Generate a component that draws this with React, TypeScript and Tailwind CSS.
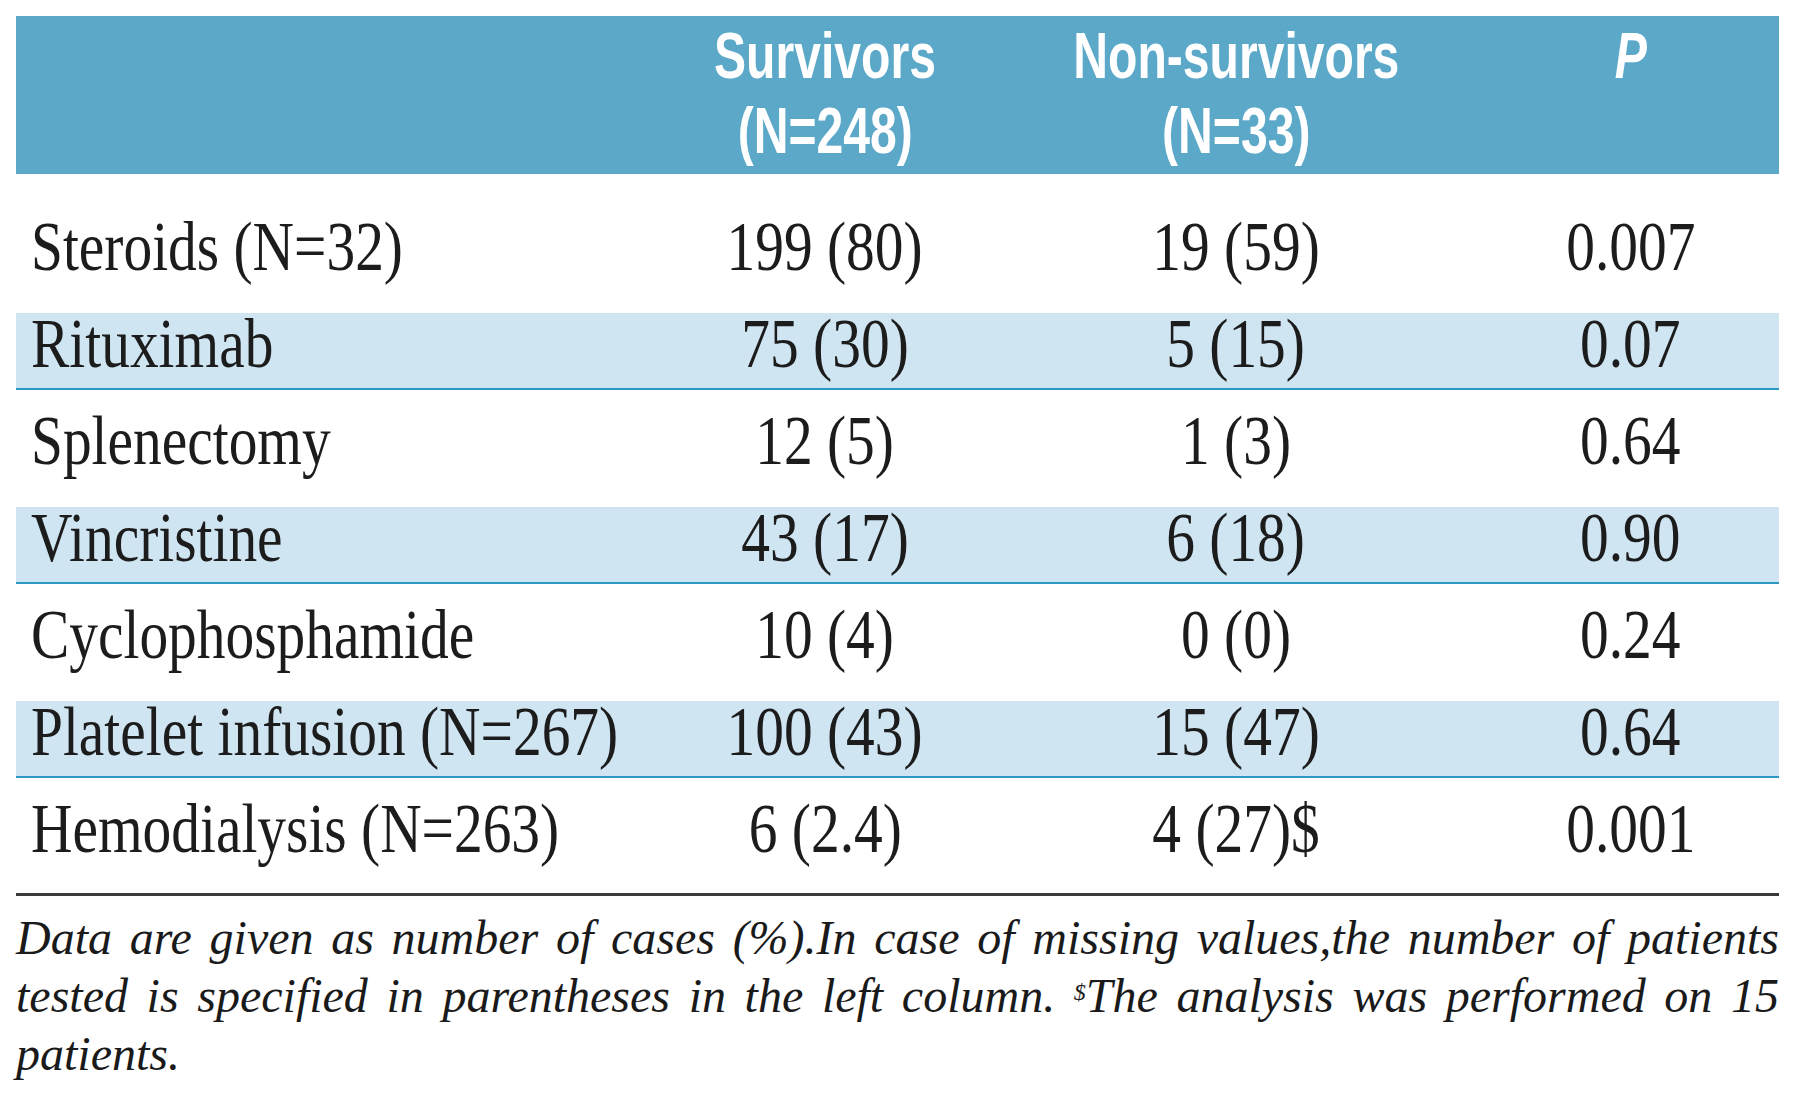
import React from "react";

type Row = [string, string, string, string];

const rows: Row[] = [
  ["Steroids (N=32)", "199 (80)", "19 (59)", "0.007"],
  ["Rituximab", "75 (30)", "5 (15)", "0.07"],
  ["Splenectomy", "12 (5)", "1 (3)", "0.64"],
  ["Vincristine", "43 (17)", "6 (18)", "0.90"],
  ["Cyclophosphamide", "10 (4)", "0 (0)", "0.24"],
  ["Platelet infusion (N=267)", "100 (43)", "15 (47)", "0.64"],
  ["Hemodialysis (N=263)", "6 (2.4)", "4 (27)$", "0.001"]
];

const cols = "grid grid-cols-[600px_418px_404px_1fr]";

function Cell({ text, left }: { text: string; left?: boolean }) {
  return (
    <div className={left ? "pl-[15px] flex justify-start" : "flex justify-center"}>
      <span
        className={`inline-block whitespace-nowrap scale-x-[0.82] ${left ? "origin-left" : "origin-center"}`}>
        {text}
      </span>
    </div>
  );
}

function Head({ lines, italic }: { lines: string[]; italic?: boolean }) {
  return (
    <div className="flex flex-col items-center">
      {lines.map((l) => (
        <span
          key={l}
          className={`block whitespace-nowrap scale-x-[0.74] origin-center ${italic ? "italic" : ""}`}>
          {l}
        </span>
      ))}
    </div>
  );
}

export default function App() {
  return (
    <div className="w-[1800px] h-[1098px] bg-white overflow-hidden pt-[16px] px-[16px]">
      <div className="w-[1763px]">
        {/* header */}
        <div
          className={`${cols} h-[158px] pt-[2px] bg-[#5ba8c9] text-white font-bold text-[65px] leading-[75px] font-['Liberation_Sans',sans-serif]`}>
          <div />
          <Head lines={["Survivors", "(N=248)"]} />
          <Head lines={["Non-survivors", "(N=33)"]} />
          <div className="pl-[44px]">
            <Head lines={["P"]} italic />
          </div>
        </div>

        {/* body */}
        <div className="mt-[22px] font-['Liberation_Serif',serif] text-[70px] leading-[61px] text-[#1c1c1c]">
          {rows.map((r, i) => {
            const shaded = i % 2 === 1;
            return (
              <div key={i} className="h-[97px] flex flex-col justify-end">
                <div
                  className={`${cols} h-[77px] ${shaded ? "bg-[#cfe5f2] border-b-2 border-[#2e98c4]" : ""}`}>
                  <Cell text={r[0]} left />
                  <Cell text={r[1]} />
                  <Cell text={r[2]} />
                  <div className="pl-[44px]">
                    <Cell text={r[3]} />
                  </div>
                </div>
              </div>
            );
          })}
        </div>

        <div className="mt-[18px] border-t-[3px] border-[#3a3a3a]" />

        {/* footnote */}
        <div className="mt-[13px] font-['Liberation_Serif',serif] italic text-[48px] leading-[58px] text-[#1a1a1a]">
          <div className="text-justify [text-align-last:justify]">
            Data are given as number of cases (%).In case of missing values,the number of patients
          </div>
          <div className="text-justify [text-align-last:justify]">
            tested is specified in parentheses in the left column. <sup className="text-[24px]">$</sup>The analysis was performed on 15
          </div>
          <div>patients.</div>
        </div>
      </div>
    </div>
  );
}
